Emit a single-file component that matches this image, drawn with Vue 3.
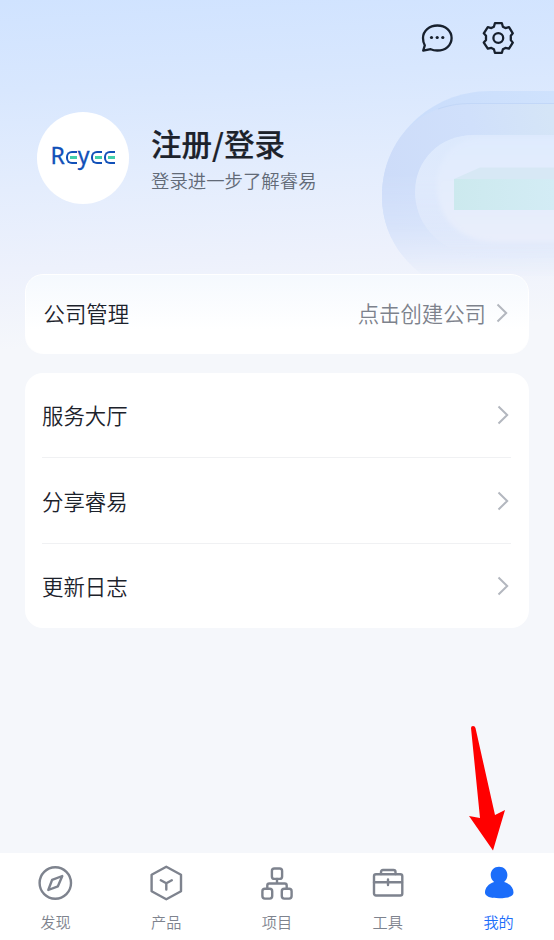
<script setup>
const services = ['服务大厅', '分享睿易', '更新日志']
const tabs = [
  { id: 'discover', label: '发现' },
  { id: 'product', label: '产品' },
  { id: 'project', label: '项目' },
  { id: 'tools', label: '工具' },
  { id: 'mine', label: '我的' }
]
</script>

<template>
  <div class="page">
    <svg class="hero-art" width="194" height="220" viewBox="360 80 194 220" aria-hidden="true">
      <defs>
        <linearGradient id="back" x1="382" y1="0" x2="554" y2="0" gradientUnits="userSpaceOnUse">
          <stop offset="0" stop-color="#c9dcfb" /><stop offset="1" stop-color="#cfe2fd" />
        </linearGradient>
        <linearGradient id="ring" x1="382" y1="170" x2="554" y2="130" gradientUnits="userSpaceOnUse">
          <stop offset="0" stop-color="#cddcf9" /><stop offset=".55" stop-color="#d0e0fb" /><stop offset="1" stop-color="#d5e5f7" />
        </linearGradient>
        <linearGradient id="fade" x1="0" y1="175" x2="0" y2="276" gradientUnits="userSpaceOnUse">
          <stop offset="0" stop-color="#fff" /><stop offset=".5" stop-color="#aaa" /><stop offset="1" stop-color="#080808" />
        </linearGradient>
        <linearGradient id="well" x1="0" y1="135" x2="0" y2="250" gradientUnits="userSpaceOnUse">
          <stop offset="0" stop-color="#dce9fd" /><stop offset="1" stop-color="#e4ebfb" />
        </linearGradient>
        <linearGradient id="floor" x1="0" y1="135" x2="0" y2="242" gradientUnits="userSpaceOnUse">
          <stop offset="0" stop-color="#dfebfe" /><stop offset="1" stop-color="#e9eefb" />
        </linearGradient>
        <linearGradient id="block" x1="454" y1="0" x2="554" y2="0" gradientUnits="userSpaceOnUse">
          <stop offset="0" stop-color="#cce9ee" /><stop offset="1" stop-color="#d3ecf5" />
        </linearGradient>
        <mask id="fadeMask"><rect x="360" y="80" width="194" height="220" fill="url(#fade)" /></mask>
        <filter id="soft" x="-10%" y="-10%" width="120%" height="120%"><feGaussianBlur stdDeviation="2" /></filter>
      </defs>
      <g mask="url(#fadeMask)">
        <path d="M600 91H490C430 91 382 138 382 196C382 232 400 258 424 276H600Z" fill="url(#back)" />
        <path d="M600 103H470C453 103 438 108 425 115C399 130 382 160 382 196C382 232 400 258 424 276H600Z" fill="url(#ring)" />
        <path d="M600 103.500H470C457 103.500 447 106 438 109" fill="none" stroke="#c2d7f8" stroke-width="1" />
      </g>
      <path d="M600 135H473C440 135 415 160 415 192C415 225 440 252 480 258H600Z" fill="url(#well)" mask="url(#fadeMask)" />
      <path d="M600 138H476C450 142 437 162 437 184C437 219 460 242 497 242H600Z" fill="url(#floor)" filter="url(#soft)" />
      <path d="M454 179L480 167.500H554V181H454Z" fill="#d7e8f5" />
      <path d="M454 179H554V210H454Z" fill="url(#block)" />
    </svg>

    <header class="toolbar">
      <svg width="34" height="34" viewBox="0 0 34 34" class="line-icon">
        <path d="M3.200 29.600L4.800 24.400C3.500 22.300 3 19.500 3 17C3 9.800 9.300 4.500 17.400 4.500C25.600 4.500 31.600 9.900 31.600 17.100C31.600 24.400 25.500 29.500 17.300 29.500C15 29.500 12.700 29.100 10.700 28.200Z" />
        <g class="dots"><circle cx="11.500" cy="16.500" r="1.600" /><circle cx="17.200" cy="16.500" r="1.600" /><circle cx="22.800" cy="16.500" r="1.600" /></g>
      </svg>
      <svg width="34" height="34" viewBox="0 0 34 34" class="line-icon">
        <path d="M13.900 2.200H20.900L21.900 5.700L24.400 7.100L28 6.200L31.800 12.300L29.800 14.700V19.100L31.800 21.600L28 27.700L24.400 26.900L21.900 28.300L20.900 31.800H13.900L12.900 28.300L10.400 26.900L6.800 27.700L2.800 21.600L5 19.100V14.700L2.800 12.300L6.800 6.200L10.400 7.100L12.900 5.700Z" />
        <circle cx="17.300" cy="17" r="4.900" />
      </svg>
    </header>

    <section class="profile">
      <div class="avatar">
        <span class="brand">R<span class="e">e</span>y<span class="e">e</span><span class="e">e</span></span>
      </div>
      <div class="identity">
        <h1>注册/登录</h1>
        <p>登录进一步了解睿易</p>
      </div>
    </section>

    <main class="cards">
      <section class="card company">
        <span>公司管理</span>
        <span class="hint">点击创建公司</span>
        <svg class="chevron" width="12" height="20" viewBox="0 0 12 20"><path d="M1.500 1.500L10.200 10L1.500 18.500" /></svg>
      </section>
      <section class="card list">
        <div v-for="name in services" :key="name" class="row">
          <span>{{ name }}</span>
          <svg class="chevron" width="12" height="20" viewBox="0 0 12 20"><path d="M1.500 1.500L10.200 10L1.500 18.500" /></svg>
        </div>
      </section>
    </main>

    <nav class="tabbar">
      <div v-for="tab in tabs" :key="tab.id" class="tab" :class="{ active: tab.id === 'mine' }">
        <svg width="36" height="36" viewBox="0 0 36 36">
          <g v-if="tab.id === 'discover'">
            <circle cx="18.300" cy="18" r="15.700" />
            <path d="M25.300 11L15.100 14.900L11.300 25L20.900 21.300Z" />
          </g>
          <g v-else-if="tab.id === 'product'">
            <path d="M18.300 1.800L33 9.700V26.300L18.300 34.200L3.600 26.300V9.700Z" />
            <path d="M12.800 15.200L18.300 18.200L23.800 15.200M18.300 18.200V24.500" />
          </g>
          <g v-else-if="tab.id === 'project'">
            <rect x="12.900" y="3.500" width="10.200" height="10.400" rx="2.500" />
            <rect x="3.400" y="23.800" width="9.800" height="9.800" rx="2.500" />
            <rect x="22.800" y="23.800" width="9.800" height="9.800" rx="2.500" />
            <path d="M18 14V18.500M8.300 23.500V20.500Q8.300 18.500 10.300 18.500H25.700Q27.700 18.500 27.700 20.500V23.500" />
          </g>
          <g v-else-if="tab.id === 'tools'">
            <rect x="4" y="9.200" width="28.300" height="21.300" rx="2" />
            <path d="M11 9V7Q11 5 13 5H23.500Q25.500 5 25.500 7V9M4 17.200H32M18 14.500V20" />
          </g>
          <path v-else class="person" d="M18 1.800C22.800 1.800 26.400 5.300 26.400 10C26.400 12.800 25.200 15.300 23.100 16.900C28.800 18.600 32.500 22.700 32.500 27.500C32.500 31.600 26.900 33.200 18.200 33.200C9.500 33.200 4 31.600 4 27.500C4 22.700 7.500 18.600 13.100 16.900C11 15.300 9.700 12.800 9.700 10C9.700 5.300 13.300 1.800 18 1.800Z" />
        </svg>
        <span>{{ tab.label }}</span>
      </div>
    </nav>

    <svg class="pointer" width="40" height="130" viewBox="466 724 40 130" aria-hidden="true">
      <path d="M471 728Q471 726 473 726Q475 726 475.500 728L495 815L505 810L493 850.500L469 816L480 818Z" />
    </svg>
  </div>
</template>

<style>
body { margin: 0; }
</style>

<style scoped>
.page {
  position: relative;
  display: flex;
  flex-direction: column;
  box-sizing: border-box;
  width: 554px;
  height: 940px;
  overflow: hidden;
  color: #1c222b;
  font-family: "Noto Sans CJK SC", sans-serif;
  background: linear-gradient(177deg, #f5f7fb 0, #f5f7fb 100%);
  background: linear-gradient(177deg, #d0e3ff 0, #d8e7fe 90px, #e4edfd 190px, #edf1fc 270px, #f5f7fb 350px, #f5f7fb 100%);
}
.hero-art { position: absolute; top: 80px; right: 0; }
.toolbar {
  display: flex;
  justify-content: flex-end;
  gap: 27px;
  padding: 21px 39px 0 0;
  height: 34px;
}
.line-icon { fill: none; stroke: #17202d; stroke-width: 2.300; stroke-linejoin: round; }
.dots { fill: #17202d; stroke: none; }
.profile {
  position: relative;
  display: flex;
  gap: 22px;
  margin: 57px 0 0 37px;
  height: 92px;
}
.avatar {
  display: flex;
  align-items: center;
  justify-content: center;
  box-sizing: border-box;
  width: 92px;
  height: 92px;
  padding-bottom: 6px;
  border-radius: 50%;
  background: #fff;
}
.brand {
  display: flex;
  align-items: baseline;
  color: #1150b8;
  font: 400 23px/26px "Noto Sans", sans-serif;
  -webkit-text-stroke: 0.300px #1150b8;
}
.e {
  position: relative;
  width: 13px;
  color: transparent;
  -webkit-text-stroke: 0;
}
.e::before {
  content: "";
  position: absolute;
  left: 1px;
  top: 9px;
  width: 9px;
  height: 9px;
  border: 2px solid #1150b8;
  border-right: 0;
  border-radius: 6px 0 0 6px;
}
.e::after {
  content: "";
  position: absolute;
  left: 5px;
  top: 14px;
  width: 7px;
  height: 3px;
  background: #42cfaa;
}
.identity { padding-top: 10px; }
h1 { margin: 0; font-size: 30.500px; line-height: 43px; font-weight: 500; -webkit-text-stroke: 0.200px; }
p { margin: 2px 0 0; color: #626a77; font-size: 18.400px; line-height: 27px; font-weight: 350; }
.cards {
  position: relative;
  display: flex;
  flex-direction: column;
  gap: 19px;
  margin: 70px 25px 0;
  font-size: 21.400px;
  line-height: 32px;
  font-weight: 350;
}
.card { border-radius: 18px; background: #fff; box-sizing: border-box; }
.company {
  display: flex;
  align-items: center;
  height: 80px;
  padding: 0 20px 3px 17.500px;
  border: 1px solid #fff;
  background: linear-gradient(#f5f9fe, #fff 70%);
}
.hint { margin-left: auto; margin-right: 10px; color: #7d828c; }
.chevron { fill: none; stroke: #b3b7bf; stroke-width: 2; }
.list { height: 255px; padding: 0 18px 0 17px; }
.row {
  display: flex;
  align-items: center;
  justify-content: space-between;
  box-sizing: border-box;
  height: 85.400px;
  padding-right: 2px;
  border-bottom: 1.400px solid #f0f1f3;
}
.row:last-child { height: 84px; border-bottom: 0; }
.tabbar {
  display: grid;
  grid-template-columns: repeat(5, 1fr);
  margin-top: auto;
  height: 87px;
  background: #fff;
}
.tab {
  display: flex;
  flex-direction: column;
  align-items: center;
  padding-top: 12px;
  color: #7e838e;
  font-size: 15.200px;
  line-height: 22px;
  font-weight: 350;
}
.tab svg { fill: none; stroke: currentColor; stroke-width: 2.400; stroke-linejoin: round; stroke-linecap: round; }
.tab span { margin-top: 9px; }
.tab.active { color: #1b6dfa; }
.tab .person { fill: currentColor; stroke: none; }
.pointer { position: absolute; left: 466px; top: 724px; fill: #f00; }
</style>
